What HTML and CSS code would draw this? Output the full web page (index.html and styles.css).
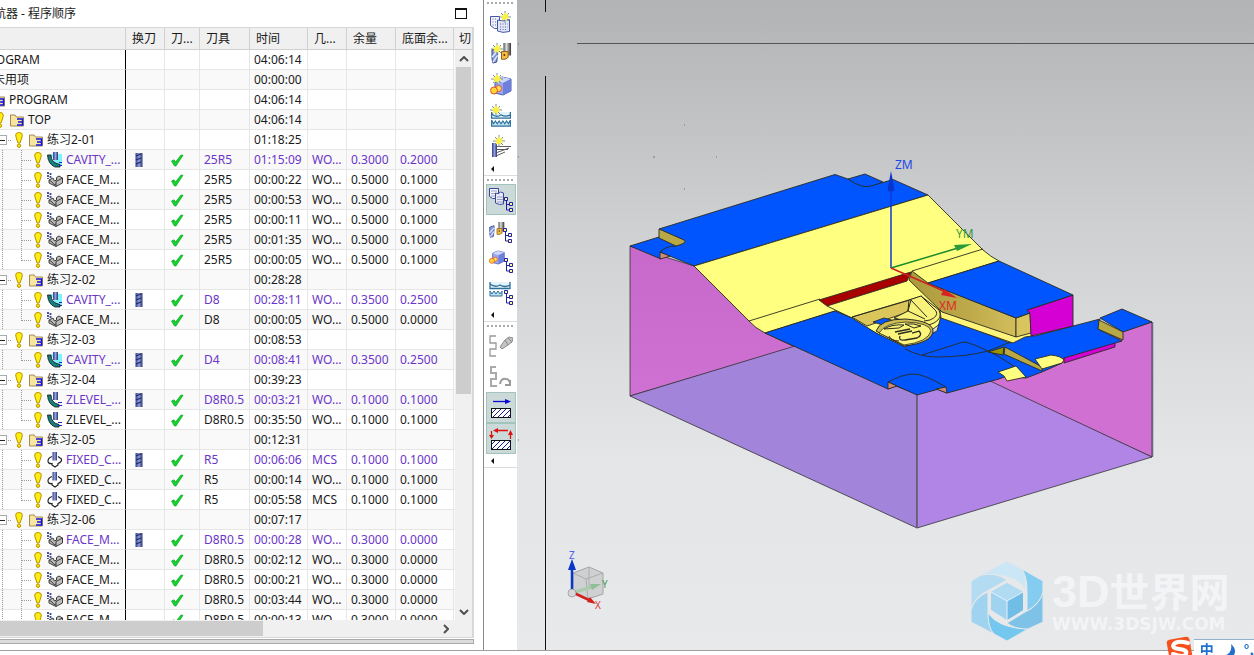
FILE: index.html
```
<!DOCTYPE html>
<html lang="zh-CN">
<head>
	<meta charset="UTF-8">
	<meta name="viewport" content="width=device-width, initial-scale=1.0">
	<title>工序导航器 - 程序顺序</title>
	<link rel="stylesheet" href="styles.css">
</head>
<body>
	<!-- icon sprite -->
	<svg class="sprite" aria-hidden="true">
		<defs>
			<linearGradient id="g-steel" x1="0" x2="1" y1="0" y2="0"><stop offset="0" stop-color="#33407f"/><stop offset=".5" stop-color="#8f9fe0"/><stop offset="1" stop-color="#2b3570"/></linearGradient>
			<linearGradient id="g-grey" x1="0" x2="1" y1="0" y2="0"><stop offset="0" stop-color="#555"/><stop offset=".4" stop-color="#ddd"/><stop offset="1" stop-color="#333"/></linearGradient>
			<pattern id="p-hatch" width="5" height="5" patternUnits="userSpaceOnUse"><rect width="5" height="5" fill="#fff"/><path d="M-1 6L6-1M-1 1L1-1M4 6L6 4" stroke="#1a1a9c" stroke-width="1"/></pattern>
		</defs>
		<symbol id="i-bang" viewBox="0 0 8 16"><path d="M.7 3Q.7.500 4 .5T7.300 3Q7.300 5 5 11H3Q.7 5 .7 3Z" fill="#ffee10" stroke="#b89400"/><circle cx="4" cy="13.700" r="1.700" fill="#ffe600" stroke="#b89400"/></symbol>
		<symbol id="i-folder" viewBox="0 0 16 16"><path d="M1.500 14V3H6l1.500 2h7v9Z" fill="#f7e6a0" stroke="#a48a52"/><path d="M8 7h5.500v6H8M9 10h4" fill="none" stroke="#1212e0" stroke-width="1.500"/></symbol>
		<symbol id="i-cavity" viewBox="0 0 16 16"><path d="M4 2h11v11H9Z" fill="#7df2fb"/><path d="M.5 3H4Q4 11 13 12.500V15H8Q1 12 .5 3Z" fill="#168080" stroke="#111" stroke-width=".8"/><path d="M6 0h5v8H6Z" fill="url(#g-steel)"/><path d="M12 10.500h3M12 13.500h3" stroke="#2222c0"/></symbol>
		<symbol id="i-zlevel" viewBox="0 0 16 16"><path d="M.5 3H4Q4 11 12 12.500V15H8Q1 12 .5 3Z" fill="#168080" stroke="#111" stroke-width=".8"/><path d="M6 0h5v8H6Z" fill="url(#g-steel)"/><path d="M11 10.500h4M11 13.500h4" stroke="#2222c0"/></symbol>
		<symbol id="i-fixed" viewBox="0 0 16 16"><path d="M5 4.500Q1 6 1 9t4 2.500V13l3 2 3-2v-1.500Q15 10 14.500 7L11 4.500" fill="#fff" stroke="#222" stroke-width="1.200"/><path d="M5.500 0h4.500v8.500H5.500Z" fill="url(#g-steel)"/></symbol>
		<symbol id="i-face" viewBox="0 0 16 16"><path d="M1 0v7M3.500 1v5" stroke="#3b4694" stroke-width="1.800" stroke-dasharray="2 1"/><path d="M2 8l4-2 1.500 3 2-1 0-2.500L12 4l3.500 2v5L9 14.500 2 11Z" fill="#bfbdba" stroke="#3c3c3c"/><path d="M2 8l3 2 2 2.500 2-.5V9.500L15.500 6M9 12v2.500" fill="none" stroke="#3c3c3c"/></symbol>
		<symbol id="i-tool" viewBox="0 0 8 14"><path d="M.5 0h7v14h-7Z" fill="url(#g-steel)"/><path d="M1 3l5-2M1 7l5-2M1 11l5-2" stroke="#1d2765" stroke-width="1.200"/></symbol>
		<symbol id="i-check" viewBox="0 0 14 14"><path d="M1.500 8L4 6.800 5.500 9 11 2l2 .3L6 13H4.500Z" fill="#12d42e" stroke="#0aa523" stroke-width=".7"/></symbol>
		<symbol id="s-star" viewBox="0 0 12 12"><path d="M6 0v12M0 6h12M2 2l8 8M10 2l-8 8" stroke="#6d8dab" stroke-width="1"/><path d="M6 1l1.200 2.500L10 3 8.700 5.500 11 7 8 7.700 7.500 10.500 5.500 8.500 2.500 9.500 3.500 6.700 1 5 4 4.300Z" fill="#fbf04a"/></symbol>
		<symbol id="s-tree" viewBox="0 0 9 15"><path d="M2.500 2v11H7M2.500 7.500H7" fill="none" stroke="#2020a0"/><path d="M.5.5h3v3h-3ZM5.500 5.500h3v3h-3ZM5.500 11.500h3v3h-3Z" fill="#fff79a" stroke="#2020a0"/></symbol>
		<symbol id="s-sheets" viewBox="0 0 21 17"><path d="M.5.500h9v12h-5l-4-3Z" fill="#eef0fc" stroke="#4757a8"/><path d="M7.500 4q5 2 12-.5v12q-7 2-12-.5Z" fill="#dfe4f9" stroke="#4757a8"/><path d="M2.500 3h5M2.500 6h4M2.500 9h4M10 8h8M10 11h8M10 13.500h7" stroke="#6b6f8d" stroke-dasharray="1 1.500"/></symbol>
		<symbol id="s-pages" viewBox="0 0 16 17"><path d="M.5.500h9v10h-6l-3-2Z" fill="#f2f4fd" stroke="#3a4798"/><path d="M6.500 5q3 2 5-1l3 1v11q-4 1.500-8-1Z" fill="#e6eafb" stroke="#3a4798"/><path d="M2.500 3h6M2.500 5.500h4M2.500 8h3M8.500 9h5M8.500 11.500h5M8.500 14h5" stroke="#555a80" stroke-dasharray="1 1"/></symbol>
		<symbol id="s-drill" viewBox="0 0 22 22"><path d="M1 7l6-2v6l-1 9-4 1-1-5Z" fill="#8397dc" stroke="#354889"/><path d="M1 15l6-7M2 20l5-7" stroke="#e7ecff" stroke-width="1.500"/><path d="M13 0h8v13h-4v3h-4Z" fill="url(#g-grey)"/><path d="M11 9h7v6l-3 2h-4Z" fill="#f5bd42" stroke="#8a5a12"/><circle cx="14" cy="12.500" r="1" fill="#5b2a08"/></symbol>
		<symbol id="s-cube" viewBox="0 0 22 20"><path d="M5 4l7-3 9 2v12l-8 4-8-2Z" fill="#9aa8f0" stroke="#4b5cae"/><path d="M5 4l8 3 8-4-9-2Z" fill="#cdd5fd"/><path d="M13 7v12l8-4V3Z" fill="#6e7fdc"/><circle cx="8.500" cy="12.500" r="3" fill="#ffe15a" stroke="#e6502c"/><circle cx="4" cy="14.500" r="3.500" fill="#ffd633" stroke="#e6502c"/></symbol>
		<symbol id="s-wave" viewBox="0 0 22 16"><path d="M1 0v6.500h20V0M1 2q5 5 10 1 5 3 10 0" fill="#e5f4fb" stroke="#2a6e9c" stroke-width="1.300"/><path d="M1 8.500l2 4 2-3 2 3 2-3 2 3 2-3 2 3 2-3 2 3 2-4v6.500H1Z" fill="#bfe2f2" stroke="#2a6e9c" stroke-width="1.200"/></symbol>
		<symbol id="t-program" viewBox="0 0 24 24"><use href="#s-sheets" x="1" y="5" width="21" height="17"/><use href="#s-star" x="10" y="0" width="12" height="12"/></symbol>
		<symbol id="t-tool" viewBox="0 0 24 24"><use href="#s-drill" x="2" y="1" width="21" height="21"/><use href="#s-star" x="2" y="1" width="12" height="12"/></symbol>
		<symbol id="t-geom" viewBox="0 0 24 24"><use href="#s-cube" x="1" y="3" width="22" height="20"/><use href="#s-star" x="2" y="0" width="12" height="12"/></symbol>
		<symbol id="t-method" viewBox="0 0 24 24"><use href="#s-wave" x="1" y="8" width="22" height="15"/><use href="#s-star" x="1" y="0" width="12" height="12"/></symbol>
		<symbol id="t-operation" viewBox="0 0 24 24"><path d="M3 8h5v14H3Z" fill="url(#g-steel)"/><path d="M8 11.500h14M8 14.500h11M8 17.500L20 13M8 20.500L16 17" stroke="#5c5c5c"/><use href="#s-star" x="4" y="0" width="12" height="12"/></symbol>
		<symbol id="v-program" viewBox="0 0 24 24"><use href="#s-pages" x="0" y="0" width="16" height="17"/><use href="#s-tree" x="15" y="9" width="9" height="15"/></symbol>
		<symbol id="v-tool" viewBox="0 0 24 24"><use href="#s-drill" x="0" y="0" width="16" height="22"/><use href="#s-tree" x="14" y="9" width="9" height="15"/></symbol>
		<symbol id="v-geom" viewBox="0 0 24 24"><use href="#s-cube" x="0" y="0" width="16" height="15"/><use href="#s-tree" x="15" y="8" width="9" height="15"/></symbol>
		<symbol id="v-method" viewBox="0 0 24 24"><path d="M1 1v6.500h20V1M1 3q5 4 10 1 5 3 10 0" fill="#e5f4fb" stroke="#2a6e9c" stroke-width="1.300"/><path d="M1 10v5h12v-5l-2 3-2-3-2 3-2-3-2 3Z" fill="#bfe2f2" stroke="#2a6e9c"/><use href="#s-tree" x="15" y="9" width="9" height="15"/></symbol>
		<symbol id="t-generate" viewBox="0 0 24 24"><path d="M7 2H1v7h6v6H1v7h6" fill="none" stroke="#9a9a9a" stroke-width="1.300"/><path d="M11 13L16 6 20 3 24 4 23 8 19 11 13 15Z" fill="#c4c4c4" stroke="#8d8d8d"/><path d="M16 6l3 5M19 4l4 4" stroke="#8d8d8d"/></symbol>
		<symbol id="t-replay" viewBox="0 0 24 24"><path d="M7 2H2v6h5v6H2v7h6" fill="none" stroke="#aaa" stroke-width="2"/><path d="M11 19q1-6 6-5 3 0 4 4M21 15v5h-5" fill="none" stroke="#9a9a9a" stroke-width="2"/></symbol>
		<symbol id="t-cut" viewBox="0 0 24 24"><path d="M4 5.500h14" stroke="#0808d8" stroke-width="1.300"/><path d="M16 3l6 2.500L16 8Z" fill="#0808d8"/><rect x="2.500" y="12.500" width="19" height="9" fill="url(#p-hatch)" stroke="#111"/></symbol>
		<symbol id="t-noncut" viewBox="0 0 24 24"><path d="M8 3.500h11M2.500 4v5M21.500 12V7" stroke="#dd1111" stroke-width="1.300"/><path d="M4 3.500L9 1v5ZM0 8h5l-2.500 4ZM19 8h5l-2.500-5Z" fill="#dd1111"/><rect x="2.500" y="13.500" width="19" height="9" fill="url(#p-hatch)" stroke="#111"/></symbol>
	</svg>

	<div class="app">
		<section class="navigator">
			<header class="nav-title">
				<h1>工序导航器 - 程序顺序</h1>
				<button class="maximize" aria-label="最大化"></button>
			</header>
			<div class="nav-frame">
				<div class="nav-scroll">
					<table class="ops">
						<colgroup>
							<col class="c-name"><col class="c-change"><col class="c-path"><col class="c-tool"><col class="c-time"><col class="c-geom"><col class="c-stock"><col class="c-floor"><col>
						</colgroup>
						<thead>
							<tr><th></th><th>换刀</th><th>刀...</th><th>刀具</th><th>时间</th><th>几...</th><th>余量</th><th>底面余...</th><th>切</th></tr>
						</thead>
						<tbody id="ops-body"></tbody>
					</table>
					<div class="vscroll">
						<button aria-label="向上"><svg viewBox="0 0 10 6"><path d="M1 5l4-4 4 4"/></svg></button>
						<div class="track"><div class="thumb"></div></div>
						<button aria-label="向下"><svg viewBox="0 0 10 6"><path d="M1 1l4 4 4-4"/></svg></button>
					</div>
				</div>
				<div class="hscroll">
					<div class="track"><div class="thumb"></div></div>
					<button aria-label="向右"><svg viewBox="0 0 6 10"><path d="M1 1l4 4-4 4"/></svg></button>
				</div>
			</div>
			<div class="nav-splitter"></div>
		</section>

		<nav class="toolbar">
			<div class="tool-group">
				<div class="grip"></div>
				<button aria-label="创建程序"><svg><use href="#t-program"/></svg></button>
				<button aria-label="创建刀具"><svg><use href="#t-tool"/></svg></button>
				<button aria-label="创建几何体"><svg><use href="#t-geom"/></svg></button>
				<button aria-label="创建方法"><svg><use href="#t-method"/></svg></button>
				<button aria-label="创建工序"><svg><use href="#t-operation"/></svg></button>
				<div class="more"></div>
			</div>
			<div class="tool-group">
				<div class="grip"></div>
				<button class="active" aria-label="程序顺序视图"><svg><use href="#v-program"/></svg></button>
				<button aria-label="机床视图"><svg><use href="#v-tool"/></svg></button>
				<button aria-label="几何视图"><svg><use href="#v-geom"/></svg></button>
				<button aria-label="加工方法视图"><svg><use href="#v-method"/></svg></button>
				<div class="more"></div>
			</div>
			<div class="tool-group">
				<div class="grip"></div>
				<button aria-label="生成刀轨" disabled><svg><use href="#t-generate"/></svg></button>
				<button aria-label="重播刀轨" disabled><svg><use href="#t-replay"/></svg></button>
				<button class="active" aria-label="切削移动"><svg><use href="#t-cut"/></svg></button>
				<button class="active" aria-label="非切削移动"><svg><use href="#t-noncut"/></svg></button>
				<div class="more"></div>
			</div>
		</nav>

		<main class="viewport">
			<svg class="scene" viewBox="517 0 737 650" preserveAspectRatio="xMinYMin meet">
				<defs>
					<linearGradient id="g-side" x1="0" y1="0" x2="0" y2="1"><stop offset="0" stop-color="#c768cb"/><stop offset="1" stop-color="#cf70d3"/></linearGradient>
					<linearGradient id="g-wall" x1="0" y1="0" x2="1" y2="0"><stop offset="0" stop-color="#aa9a3c"/><stop offset=".5" stop-color="#bba748"/><stop offset="1" stop-color="#d3bd5b"/></linearGradient>
				</defs>
				<!-- sheet lines -->
				<path d="M545.500 0V12M545.500 76V650" stroke="#111"/>
				<path d="M577 43.500H1254" stroke="#555"/>
				<path d="M653 157h2M716 157h1M684 189h1M684 125h1M518 44h1M518 157h1M518 440h1" stroke="#777"/>

				<!-- stock -->
				<g stroke="#333" stroke-width=".8" stroke-linejoin="round">
					<path d="M630 246L694 266 749 321 765 333 795 347 630 396Z" fill="url(#g-side)"/>
					<path d="M988 382L1064 350 1152 322V457Z" fill="#d070d3"/>
					<path d="M630 396L795 346 917 390V528Z" fill="#a384db"/>
					<path d="M917 390L988 380 1152 457 917 528Z" fill="#b085e6"/>
				</g>
				<path d="M917 394V528M1152.500 322V457" stroke="#6b6480" stroke-width="1.500"/>

				<g stroke="#2b2b20" stroke-width=".9" stroke-linejoin="round">
					<!-- upper step -->
					<path d="M630 246L659 237 678 246 661 251V259Z" fill="#0055ff"/>
					<path d="M660 252L671 256 660 259Z" fill="#d08a78"/>
					<path d="M848 179L865 174 883 182 865 190Z" fill="#0055ff"/>
					<path d="M659 229L835 174.500 848 179 Q862 189 871 186L893 179.500 928 195 694 266 660 252 Q666 246 676 246L685 241Z" fill="#0055ff"/>
					<path d="M659 229L684 240Q688 243 676 246L659 238Z" fill="#b9a846"/>
					<!-- slope -->
					<path d="M694 266L928 195 983 250Q991 257 999 261L928 283 945 320 905 350 850 318 835 311 765 333Q755 328 749 321Z" fill="#ffff80"/>
					<path d="M749 321L820 299M912 271L983 249" fill="none"/>
					<path d="M819 300L911 272 907 281 827 306Z" fill="#a80000"/>
					<path d="M827 306L852 318" fill="none"/>
					<!-- pocket -->
					<path d="M852 317L910 300 908 312 867 326Z" fill="#dbc65c"/>
					<path d="M852 317L922 296" fill="none"/>
					<path d="M873 322L884 318 895 321 886 326Z" fill="#0055ff"/>
				</g>

				<!-- part floor and lower step -->
				<g stroke="#2b2b20" stroke-width=".9" stroke-linejoin="round">
					<path d="M1064 357L1115 341V347L1064 363Z" fill="#d400d4"/>
					<path d="M765 333L835 311 852 318 876 333 905 347 937 331 941 316 1010 343 1027 335 1035 336 1100 319 1098 329 1122 341 1064 358 1062 363 1042 372 1026 378 1007 376 999 379 947 393 937 389 917 394 896 386 888 389Z" fill="#0055ff"/>
					<path d="M1100 318L1122 309 1152 322 1123 332Z" fill="#0055ff"/>
					<path d="M1099 320L1123 332V340L1098 329Z" fill="#b9a846"/>
					<path d="M888 382Q903 374 914 374 924 374 946 387L917 395Z" fill="#0055ff"/>
					<path d="M888 382L897 386 888 389Z" fill="#d08a78"/>
					<path d="M936 389L946 387 947 393Z" fill="#d08a78"/>
					<path d="M905 349Q920 357 937 357 965 357 988 351L1013 341M922 355L963 342Q971 342 998 356L1015 367" fill="none"/>
				</g>

				<!-- clamp arm and engraved disc -->
				<g stroke="#2b2b20" fill="none" stroke-linejoin="round">
					<path d="M909 300L921 296 939 310Q943 318 934 323L926 326 894 318 908 311Z" fill="#f8f27a"/>
					<path d="M911 300L908 311 925 319M911 300L927 317M921 296L936 311Q939 316 930 320L924 321" />
					<path d="M876 331Q880 319 905 319 933 321 933 331 932 343 904 346Z" fill="#cdbb56"/>
					<path d="M879 333Q885 323 906 322 930 323 931 331 928 342 904 345Z" fill="#fbf57c" stroke-width=".8"/>
					<path d="M884 329Q892 324 904 325L899 328ZM905 324Q914 323 921 326L914 328ZM889 336Q891 341 899 341" stroke-width="1"/>
					<path d="M900 336Q898 341 905 340L917 338Q923 335 919 331L912 333" stroke-width="1.300"/>
					<path d="M895 332L910 329M898 334L912 331" stroke-width="1.300"/>
				</g>

				<!-- right block -->
				<g stroke="#2b2b20" stroke-width=".9" stroke-linejoin="round">
					<path d="M940 310L1016 336 1031 332 1032 336 1025 337 1013 343 941 318Z" fill="#fff47a"/>
					<path d="M912 271L928 283 1016 318V337L942 312 909 280Z" fill="url(#g-wall)"/>
					<path d="M1016 318L1030 313 1031 333 1016 337Z" fill="#d9c55f"/>
					<path d="M1027 310L1073 295V326L1031 336 1030 314Z" fill="#d400d4"/>
					<path d="M928 283L999 261 1073 295 1027 310 1030 313 1016 318 940 288Z" fill="#0055ff"/>
					<path d="M988 352L1004 347 1003 355Z" fill="#999400"/>
					<path d="M1005 347L1042 367V371L1004 354Z" fill="#b9a846"/>
					<path d="M1035 359L1051 355Q1061 356 1064 360L1062 363 1042 369Z" fill="#ffff80"/>
					<path d="M998 372L1016 366 1026 377 1007 381 1004 376Z" fill="#ffff80"/>
				</g>

				<!-- machine axes -->
				<path d="M891 268V190" stroke="#1238d8" stroke-width="1.500"/>
				<path d="M891 171L894.500 190Q891 193 887.500 190Z" fill="#0a35cc"/>
				<path d="M891 268L958 248" stroke="#1c8a2c" stroke-width="1.500"/>
				<path d="M972 244L954 245 957 251Z" fill="#2b9a3a"/>
				<path d="M891 268L946 292" stroke="#cc2020" stroke-width="1.500"/>
				<path d="M957 298L944 289 941 295Z" fill="#d92222"/>
				<g class="axis-label">
					<text x="895" y="169" fill="#1c49e8">ZM</text>
					<text x="956" y="238" fill="#3b9a3f">YM</text>
					<text x="939" y="310" fill="#dd2a2a">XM</text>
				</g>

				<!-- view triad -->
				<path d="M573 573L589 567 603 573V594L588 599 573 592Z" fill="#cfd0d1" stroke="#a5a5a5"/>
				<path d="M573 573L586 579 603 573M586 579L588 599M589 567V588" fill="none" stroke="#adadad"/>
				<path d="M575 592L592 587" stroke="#a9cdac" stroke-width="3"/>
				<path d="M601 584L590 584 592 590Z" fill="#8fbf94"/>
				<path d="M572 591V567" stroke="#0b36c8" stroke-width="2.500"/>
				<path d="M572 559L576 570H568Z" fill="#0b36c8"/>
				<path d="M574 593L589 600" stroke="#d22020" stroke-width="2.500"/>
				<path d="M596 604L587 602 590 597Z" fill="#d22020"/>
				<circle cx="572" cy="593" r="4" fill="#d6d6d6" stroke="#888" stroke-width=".6"/>
				<g class="triad-label">
					<text x="569" y="559" fill="#4a62f0">Z</text>
					<text x="602" y="588" fill="#4b9a4f">Y</text>
					<text x="595" y="609" fill="#dd3838">X</text>
				</g>
			</svg>

			<div class="watermark">
				<svg class="mark" viewBox="0 0 74 82">
					<g stroke="#e6e8ea" stroke-linejoin="round">
						<path d="M11 15L37 1 52 9Q57 17 55 29Q46 13 11 15Z" fill="#cbe7f5"/>
						<path d="M1 21L11 15Q26 12 37 20L19 30Q4 37 1 50Z" fill="#b3dcf3"/>
						<path d="M1 50Q4 38 18 32V51Q18 67 24 74L1 62Z" fill="#9fd3ef"/>
						<path d="M18 53Q28 68 58 69L37 81 24 74Q18 68 18 53Z" fill="#74c8ef"/>
						<path d="M37 63L55 52Q69 46 73 32V62L58 69Q44 69 37 63Z" fill="#7fc2e8"/>
						<path d="M52 9L73 21V32Q70 44 57 51V31Q57 17 52 9Z" fill="#85cdf0"/>
					</g>
					<path d="M37 23L53 32V50L37 60 21 50V32Z" fill="#9fd3ef"/>
					<path d="M21 32L37 23 53 32 37 41Z" fill="#b0dbf3"/>
					<path d="M37 41L53 32V50L37 60Z" fill="#70bde6"/>
					<path d="M21 32L37 41 53 32M37 41V60" fill="none" stroke="#e6f2f9"/>
				</svg>
				<div class="mark-text">
					<strong><span>3D</span>世界网</strong>
					<small>WWW.3DSJW.COM</small>
				</div>
			</div>
		</main>
	</div>

	<footer class="statusbar"></footer>

	<div class="ime">
		<svg class="ime-logo" viewBox="0 0 28 28"><rect x="2" y="3" width="23" height="25" rx="3" fill="#f4511e" transform="rotate(-10 14 14)"/><path d="M22 8Q11 5 8 9T13 14Q22 15 20 19T7 19" fill="none" stroke="#fff" stroke-width="4" stroke-linecap="round"/></svg>
		<div class="ime-bar">
			<span>中</span>
			<svg viewBox="0 0 14 14"><path d="M9 0Q15 5 12 11 8 15 1 12 11 10 9 0Z" fill="#1f70cf"/></svg>
			<span>°,</span>
		</div>
	</div>

	<script>
// level, type, label, tool, time, geometry, stock, floor stock, tool change
const rows = [
	[0, "root", "NC_PROGRAM", "", "04:06:14"],
	[1, "unused", "未用项", "", "00:00:00"],
	[1, "folder", "PROGRAM", "", "04:06:14"],
	[2, "folder", "TOP", "", "04:06:14"],
	[3, "folder", "练习2-01", "", "01:18:25"],
	[4, "cavity", "CAVITY_...", "25R5", "01:15:09", "WO...", "0.3000", "0.2000", true],
	[4, "face", "FACE_M...", "25R5", "00:00:22", "WO...", "0.5000", "0.1000"],
	[4, "face", "FACE_M...", "25R5", "00:00:53", "WO...", "0.5000", "0.1000"],
	[4, "face", "FACE_M...", "25R5", "00:00:11", "WO...", "0.5000", "0.1000"],
	[4, "face", "FACE_M...", "25R5", "00:01:35", "WO...", "0.5000", "0.1000"],
	[4, "face", "FACE_M...", "25R5", "00:00:05", "WO...", "0.5000", "0.1000"],
	[3, "folder", "练习2-02", "", "00:28:28"],
	[4, "cavity", "CAVITY_...", "D8", "00:28:11", "WO...", "0.3500", "0.2500", true],
	[4, "face", "FACE_M...", "D8", "00:00:05", "WO...", "0.5000", "0.0000"],
	[3, "folder", "练习2-03", "", "00:08:53"],
	[4, "cavity", "CAVITY_...", "D4", "00:08:41", "WO...", "0.3500", "0.2500", true],
	[3, "folder", "练习2-04", "", "00:39:23"],
	[4, "zlevel", "ZLEVEL_...", "D8R0.5", "00:03:21", "WO...", "0.1000", "0.1000", true],
	[4, "zlevel", "ZLEVEL_...", "D8R0.5", "00:35:50", "WO...", "0.1000", "0.1000"],
	[3, "folder", "练习2-05", "", "00:12:31"],
	[4, "fixed", "FIXED_C...", "R5", "00:06:06", "MCS", "0.1000", "0.1000", true],
	[4, "fixed", "FIXED_C...", "R5", "00:00:14", "WO...", "0.1000", "0.1000"],
	[4, "fixed", "FIXED_C...", "R5", "00:05:58", "MCS", "0.1000", "0.1000"],
	[3, "folder", "练习2-06", "", "00:07:17"],
	[4, "face", "FACE_M...", "D8R0.5", "00:00:28", "WO...", "0.3000", "0.0000", true],
	[4, "face", "FACE_M...", "D8R0.5", "00:02:12", "WO...", "0.3000", "0.0000"],
	[4, "face", "FACE_M...", "D8R0.5", "00:00:21", "WO...", "0.3000", "0.0000"],
	[4, "face", "FACE_M...", "D8R0.5", "00:03:44", "WO...", "0.3000", "0.0000"],
	[4, "face", "FACE_M...", "D8R0.5", "00:00:13", "WO...", "0.3000", "0.0000"]
];

function icon(name) {
	return `<svg class="i-${name}"><use href="#i-${name}"/></svg>`;
}

document.getElementById('ops-body').innerHTML = rows.map(function(row, n) {
	const [level, type, label, tool, time, geom, stock, floor, change] = row;
	const op = level === 4;
	const last = op && rows[n + 1] && rows[n + 1][0] !== 4;
	let name = '';

	if (level > 1) name += icon('bang');
	if (type !== 'root' && type !== 'unused') name += icon(type);

	return `<tr class="${change ? 'changed' : ''}">
		<td><div class="node level-${level} ${type}${last ? ' last' : ''}">${level === 3 ? '<i class="expander"></i>' : ''}${name}<span>${label}</span></div></td>
		<td class="mid">${change ? icon('tool') : ''}</td>
		<td class="mid">${op ? icon('check') : ''}</td>
		<td>${tool}</td><td>${time}</td><td>${geom || ''}</td><td>${stock || ''}</td><td>${floor || ''}</td><td></td>
	</tr>`;
}).join('');
	</script>
</body>
</html>
```
FILE: styles.css
```
* {
  box-sizing: border-box;
}

body {
  margin: 0;
  height: 100vh;
  display: flex;
  flex-direction: column;
  overflow: hidden;
  background: #fff;
  color: #1a1a1a;
  font: 12px/19px "Noto Sans", "Noto Sans CJK SC", sans-serif;
}

button {
  border: 0;
  padding: 0;
  background: none;
}

.sprite {
  position: absolute;
  width: 0;
  height: 0;
}

.app {
  flex: 1;
  min-height: 0;
  display: grid;
  grid-template-columns: 484px 33px 1fr;
}

/* navigator */
.navigator {
  display: flex;
  flex-direction: column;
  min-height: 0;
  overflow: hidden;
  border-right: 1px solid #8a8a8a;
  padding-right: 9px;
  padding-bottom: 6px;
}

.nav-title {
  display: flex;
  justify-content: space-between;
  align-items: center;
  height: 27px;
  margin-left: -42px;
  padding-right: 7px;
}
.nav-title h1 {
  margin: 0;
  font-size: 12px;
  font-weight: normal;
}

.maximize {
  width: 12px;
  height: 11px;
  border: 1px solid #111;
  border-top-width: 2px;
}

.nav-frame {
  flex: 1;
  min-height: 0;
  display: flex;
  flex-direction: column;
  margin-left: -60px;
  border: 1px solid #d8d8d8;
  border-left: 0;
  border-right-width: 2px;
}

.nav-scroll {
  flex: 1;
  min-height: 0;
  position: relative;
  overflow: hidden;
}

.ops {
  width: 100%;
  table-layout: fixed;
  border-collapse: separate;
  border-spacing: 0;
}
.c-name { width: 186px; }
.c-change, .c-geom { width: 39px; }
.c-path { width: 35px; }
.c-tool { width: 50px; }
.c-time, .c-floor { width: 58px; }
.c-stock { width: 49px; }

.ops th {
  height: 22px;
  padding: 0 0 0 6px;
  background: #f0f0f0;
  border-right: 1px solid #d0d0d0;
  border-bottom: 1px solid #d0d0d0;
  font-weight: normal;
  text-align: left;
  white-space: nowrap;
}
.ops td {
  height: 20px;
  padding: 0 0 0 4px;
  border-right: 1px solid #e6e6e6;
  border-bottom: 1px solid #e6e6e6;
  white-space: nowrap;
}
.ops td:first-child {
  padding: 0;
  border-right-color: #000;
}
.ops th:last-child {
  border-right: 0;
  padding-left: 5px;
}
.ops tbody tr:nth-child(even) {
  background: #f9f9f9;
}
.ops .changed {
  color: #6a35c8;
}
.ops .mid {
  padding: 0 12px 0 0;
  text-align: center;
}
.ops td:nth-child(3) {
  padding-right: 10px;
}
.ops svg {
  display: inline-block;
  flex: none;
  width: 16px;
  height: 16px;
}
.ops .mid svg {
  display: block;
  width: 14px;
  height: 14px;
  margin: 0 auto;
}
.ops svg.i-bang {
  width: 8px;
}

.node {
  display: flex;
  align-items: center;
  gap: 3px;
  height: 19px;
}
.node .i-bang {
  margin-right: 2px;
}
.level-0 { padding-left: 19px; }
.level-1 { padding-left: 50px; }
.level-1.unused { padding-left: 53px; }
.level-2 { padding-left: 56px; }
.level-3 { padding-left: 56px; }

/* dotted guides */
.level-3 .expander {
  width: 11px;
  height: 10px;
  margin-right: 5px;
  border: 1px solid #aaa;
  background: linear-gradient(#222, #222) 1px 4px / 7px 1px no-repeat #fff;
}
.level-3 {
  background: repeating-linear-gradient(90deg, #999 0 1px, transparent 1px 2px) 68px 10px / 4px 1px no-repeat;
}
.level-4 {
  padding-left: 94px;
  background:
    repeating-linear-gradient(90deg, #999 0 1px, transparent 1px 2px) 82px 10px / 9px 1px no-repeat,
    repeating-linear-gradient(#999 0 1px, transparent 1px 2px) 81px 0 / 1px 100% no-repeat,
    repeating-linear-gradient(#999 0 1px, transparent 1px 2px) 62px 0 / 1px 100% no-repeat;
}
.level-4.last {
  background-size: 9px 1px, 1px 11px, 1px 100%;
}

/* scroll bars */
.vscroll {
  position: absolute;
  top: 22px;
  right: 0;
  bottom: 0;
  width: 17px;
  display: flex;
  flex-direction: column;
  background: #f0f0f0;
}
.vscroll button, .hscroll button {
  display: flex;
  flex: none;
  align-items: center;
  justify-content: center;
  width: 17px;
  height: 17px;
}
.vscroll svg {
  width: 10px;
  height: 6px;
}
.hscroll svg {
  width: 6px;
  height: 10px;
}
.vscroll path, .hscroll path {
  fill: none;
  stroke: #505050;
  stroke-width: 2;
}
.track {
  flex: 1;
}
.thumb {
  background: #cdcdcd;
}
.vscroll .thumb {
  width: 15px;
  height: 61%;
  margin: 0 1px;
}
.hscroll {
  display: flex;
  align-items: center;
  height: 17px;
  padding-right: 18px;
  background: #f0f0f0;
}
.hscroll .thumb {
  width: 65%;
  height: 15px;
}

.nav-splitter {
  height: 5px;
  margin-top: 1px;
  border: 1px solid #a9a9a9;
  border-left: 0;
  background: #dcdcdc;
}

/* toolbar */
.toolbar {
  margin-top: -1px;
  background: #fff;
}
.tool-group {
  padding: 0 1px 0 2px;
  border-bottom: 1px solid #dcdcdc;
}
.tool-group button {
  display: flex;
  align-items: center;
  justify-content: center;
  width: 30px;
  height: 31px;
}
.tool-group button.active {
  background: #cbdad8;
  border: 1px solid #a3c4bd;
}
.tool-group svg {
  width: 24px;
  height: 24px;
}
.grip {
  height: 8px;
  margin: 0 1px;
  background: repeating-linear-gradient(90deg, #aaa 0 2px, transparent 2px 4px) 0 3px / 100% 2px no-repeat;
}
.more {
  display: flex;
  align-items: center;
  height: 13px;
  padding-left: 5px;
}
.more::before {
  content: "";
  border: 3px solid transparent;
  border-right-color: #111;
  border-left: 0;
}

/* graphics window */
.viewport {
  position: relative;
  min-width: 0;
  overflow: hidden;
  background: linear-gradient(#b2b3b5, #cfd0d2 35%, #e3e5e7 70%, #e7e9eb);
}
.scene {
  display: block;
  width: 100%;
  height: 100%;
}
.scene text {
  font-family: "Noto Sans", sans-serif;
}
.axis-label {
  font-size: 12px;
}
.triad-label {
  font-size: 10px;
}

.watermark {
  position: absolute;
  right: 24px;
  bottom: 8px;
  display: flex;
  align-items: center;
  gap: 8px;
  color: #f3f4f6;
}
.mark {
  width: 74px;
  height: 82px;
}
.mark-text {
  display: flex;
  flex-direction: column;
  width: 178px;
}
.mark-text strong {
  font: bold 40px/44px "Liberation Sans", "Noto Sans CJK SC", sans-serif;
  white-space: nowrap;
}
.mark-text strong span {
  font-size: 45px;
}
.mark-text small {
  font: bold 17px/18px "DejaVu Sans", sans-serif;
}

.statusbar {
  height: 5px;
  border-top: 1px solid #a0a0a0;
  background: #fff;
}

/* input method bar */
.ime {
  position: fixed;
  right: 0;
  bottom: 0;
  display: flex;
  align-items: flex-end;
  height: 20px;
}
.ime-logo {
  flex: none;
  align-self: flex-start;
  width: 28px;
  height: 28px;
}
.ime-bar {
  display: flex;
  gap: 8px;
  height: 16px;
  padding-left: 6px;
  border-top: 1px solid #8fb3cf;
  background: #fff;
  color: #1f70cf;
  font: bold 14px/18px "Noto Sans CJK SC", sans-serif;
}
.ime-bar svg {
  width: 14px;
  height: 14px;
  margin-top: 4px;
}
```
